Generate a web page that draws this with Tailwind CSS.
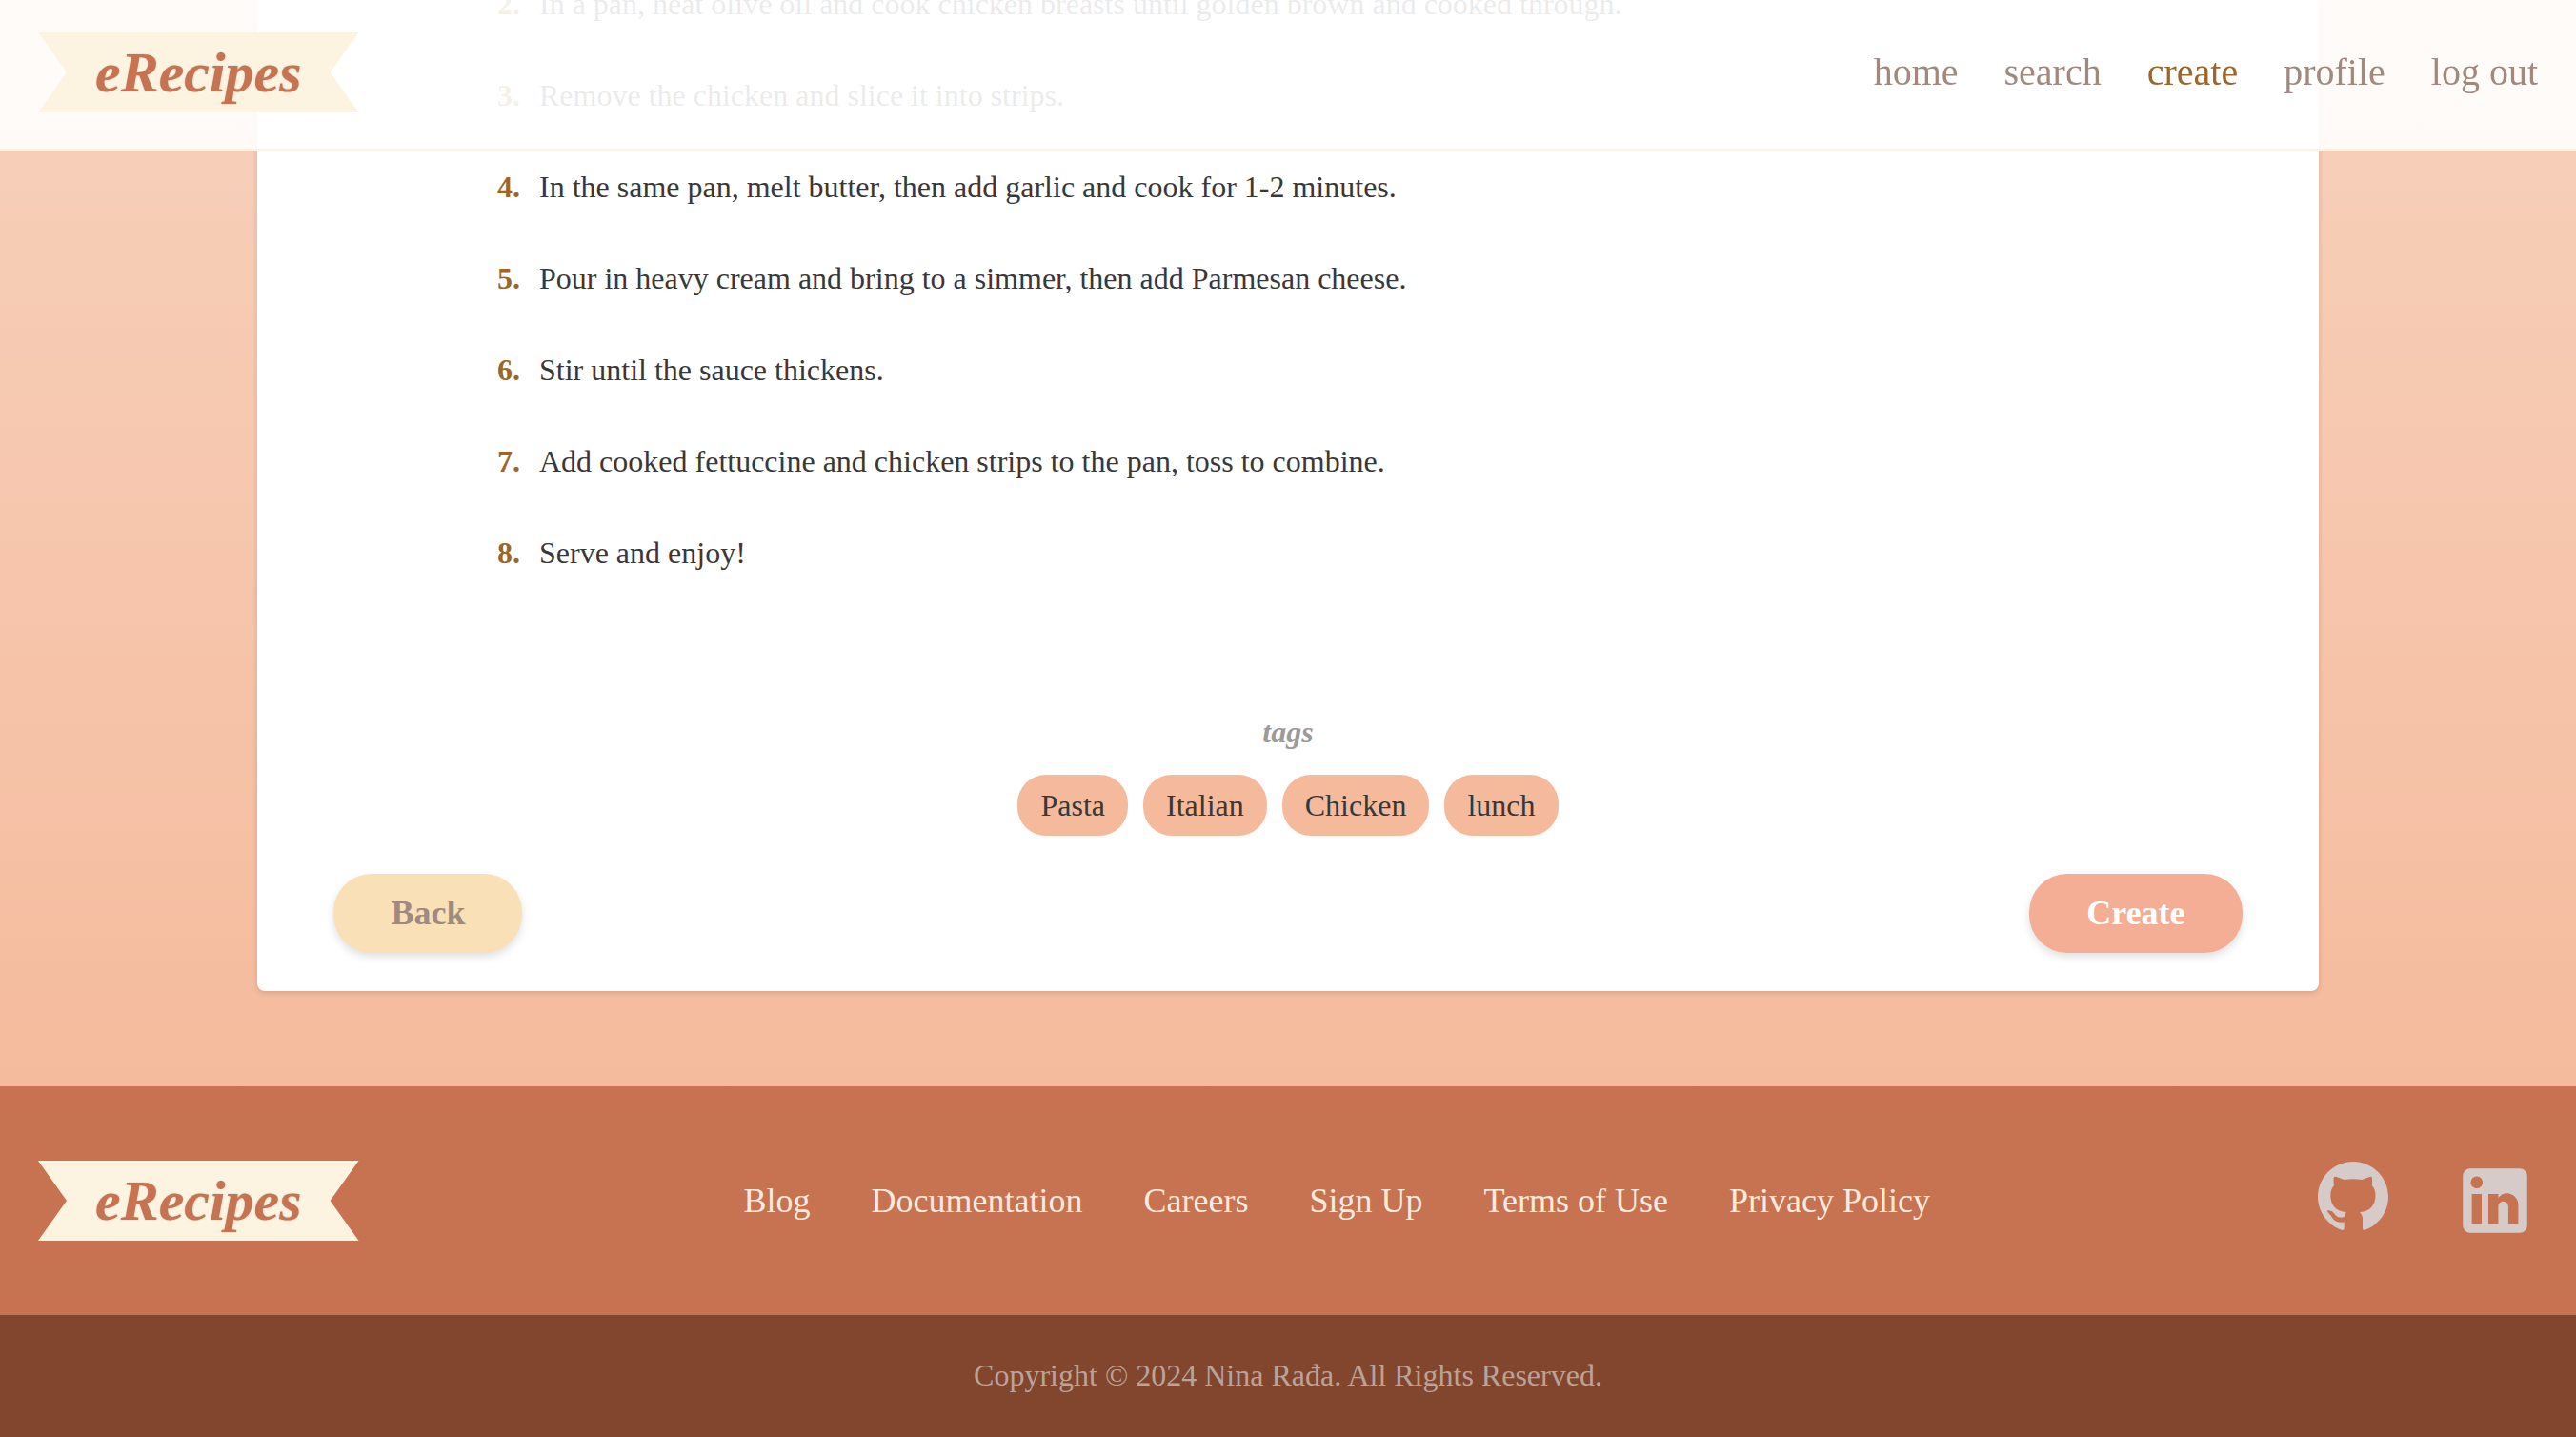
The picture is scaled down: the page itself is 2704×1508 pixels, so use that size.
<!DOCTYPE html>
<html lang="en">
<head>
<meta charset="utf-8">
<title>eRecipes – create</title>
<script src="https://cdn.jsdelivr.net/npm/@tailwindcss/browser@4"></script>
</head>
<body class="min-h-screen overflow-hidden bg-[#f5bb9d] font-['Liberation_Serif',serif] text-[32px] leading-10 text-[#383838]">
<header class="fixed inset-x-0 top-0 z-10 flex items-start justify-between border-b-2 border-[#fcf3e1] bg-white/90 px-10 pt-[34px] pb-[38px]">
  <a href="#" class="bg-[#fcf3e1] px-[60px] text-[60px] leading-[84px] font-bold italic text-[#c77250] text-shadow-[0_0_2px_rgba(0,0,0,0.2)] [clip-path:polygon(0_0,100%_0,calc(100%-30px)_50%,100%_100%,0_100%,30px_50%)]">eRecipes</a>
  <nav class="flex gap-12 text-[40px] leading-[84px] text-[#a08a80]">
    <a href="#">home</a>
    <a href="#">search</a>
    <a href="#" class="text-[#9c6628]">create</a>
    <a href="#">profile</a>
    <a href="#">log out</a>
  </nav>
</header>
<main class="overflow-hidden bg-linear-to-b from-[#f7d1bc] to-[#f5bb9d] pb-[100px]">
  <section class="mx-auto w-4/5 rounded-b-lg bg-white px-20 pb-10 shadow-[0_2px_6px_rgba(0,0,0,0.14)]">
    <ol class="mx-auto -mt-11 w-full max-w-[1660px]">
      <li class="flex h-24 items-center gap-5"><b class="text-[#9c6628]">2.</b><span>In a pan, heat olive oil and cook chicken breasts until golden brown and cooked through.</span></li>
      <li class="flex h-24 items-center gap-5"><b class="text-[#9c6628]">3.</b><span>Remove the chicken and slice it into strips.</span></li>
      <li class="flex h-24 items-center gap-5"><b class="text-[#9c6628]">4.</b><span>In the same pan, melt butter, then add garlic and cook for 1-2 minutes.</span></li>
      <li class="flex h-24 items-center gap-5"><b class="text-[#9c6628]">5.</b><span>Pour in heavy cream and bring to a simmer, then add Parmesan cheese.</span></li>
      <li class="flex h-24 items-center gap-5"><b class="text-[#9c6628]">6.</b><span>Stir until the sauce thickens.</span></li>
      <li class="flex h-24 items-center gap-5"><b class="text-[#9c6628]">7.</b><span>Add cooked fettuccine and chicken strips to the pan, toss to combine.</span></li>
      <li class="flex h-24 items-center gap-5"><b class="text-[#9c6628]">8.</b><span>Serve and enjoy!</span></li>
    </ol>
    <h2 class="mt-[120px] text-center font-bold italic text-[#9b9b9b]">tags</h2>
    <ul class="mt-[25px] flex justify-center gap-4">
      <li class="rounded-[30px] bg-[#f5ba9c] px-6 py-3">Pasta</li>
      <li class="rounded-[30px] bg-[#f5ba9c] px-6 py-3">Italian</li>
      <li class="rounded-[30px] bg-[#f5ba9c] px-6 py-3">Chicken</li>
      <li class="rounded-[30px] bg-[#f5ba9c] px-6 py-3">lunch</li>
    </ul>
    <div class="mt-10 flex justify-between text-[36px] leading-[43px] font-bold">
      <button class="rounded-[40px] bg-[#fae0b6] px-[60px] py-5 text-[#a08a80] shadow-[0_4px_10px_rgba(0,0,0,0.13)]">Back</button>
      <button class="rounded-[40px] bg-[#f3ae95] px-[60px] py-5 text-white shadow-[0_4px_10px_rgba(0,0,0,0.13)]">Create</button>
    </div>
  </section>
</main>
<footer>
  <div class="flex h-60 items-center justify-between bg-[#c77250] px-10">
    <a href="#" class="bg-[#fcf3e1] px-[60px] text-[60px] leading-[84px] font-bold italic text-[#c77250] text-shadow-[0_0_2px_rgba(0,0,0,0.2)] [clip-path:polygon(0_0,100%_0,calc(100%-30px)_50%,100%_100%,0_100%,30px_50%)]">eRecipes</a>
    <nav class="flex gap-16 text-[36px] text-[#f7ebdf]">
      <a href="#">Blog</a>
      <a href="#">Documentation</a>
      <a href="#">Careers</a>
      <a href="#">Sign Up</a>
      <a href="#">Terms of Use</a>
      <a href="#">Privacy Policy</a>
    </nav>
    <div class="flex h-[90px] items-start gap-16 text-[#d6cbc8]">
      <a href="#" aria-label="GitHub"><svg class="size-20" viewBox="5 5 80 80" fill="currentColor"><path d="M45 9C24.6 9 8 25.6 8 46c0 16 10.500 30 25.500 35Q35.700 81 35.700 79.300V72.500C28 73.500 24.500 70.500 22.500 67 21 64 18 62.500 18 60.500c7-1.500 7.500 7 13 7.100 2 0 4-.2 5-.9.2-1.900 1-3.700 2-4.500C28 61 21.300 56 21.300 44c0-4 1.200-7 3.700-10-.7-3-.7-6.500 0-9.300 3 0 6 1.300 10.500 3.300 6-1 13-1 19 0C59 26 62 24.700 64.500 24.700c.8 3.300.8 6.300.3 9.300 2.500 3 3.700 6 3.700 10C68.500 56 62 61 52 62.200c2 1.800 3 4.300 3 6.800V79.300Q55 81 56.800 81C71.500 76 82 62 82 46 82 25.600 65.400 9 45 9z"/></svg></a>
      <a href="#" aria-label="LinkedIn"><svg class="size-[90px]" viewBox="0 0 24 24" fill="currentColor"><path d="M19 3a2 2 0 0 1 2 2v14a2 2 0 0 1-2 2H5a2 2 0 0 1-2-2V5a2 2 0 0 1 2-2h14m-.5 15.5v-5.3a3.26 3.26 0 0 0-3.26-3.26c-.85 0-1.84.52-2.32 1.3v-1.11h-2.79v8.37h2.79v-4.93c0-.77.62-1.4 1.39-1.4a1.4 1.4 0 0 1 1.4 1.4v4.93h2.79M6.88 8.56a1.68 1.68 0 0 0 1.68-1.68c0-.93-.75-1.69-1.68-1.69a1.69 1.69 0 0 0-1.69 1.69c0 .93.76 1.68 1.69 1.68m1.39 9.94v-8.37H5.500v8.37h2.77z"/></svg></a>
    </div>
  </div>
  <p class="bg-[#82462e] pt-[43px] pb-[45px] text-center text-[#b9a39a]">Copyright © 2024 Nina Rađa. All Rights Reserved.</p>
</footer>
</body>
</html>
